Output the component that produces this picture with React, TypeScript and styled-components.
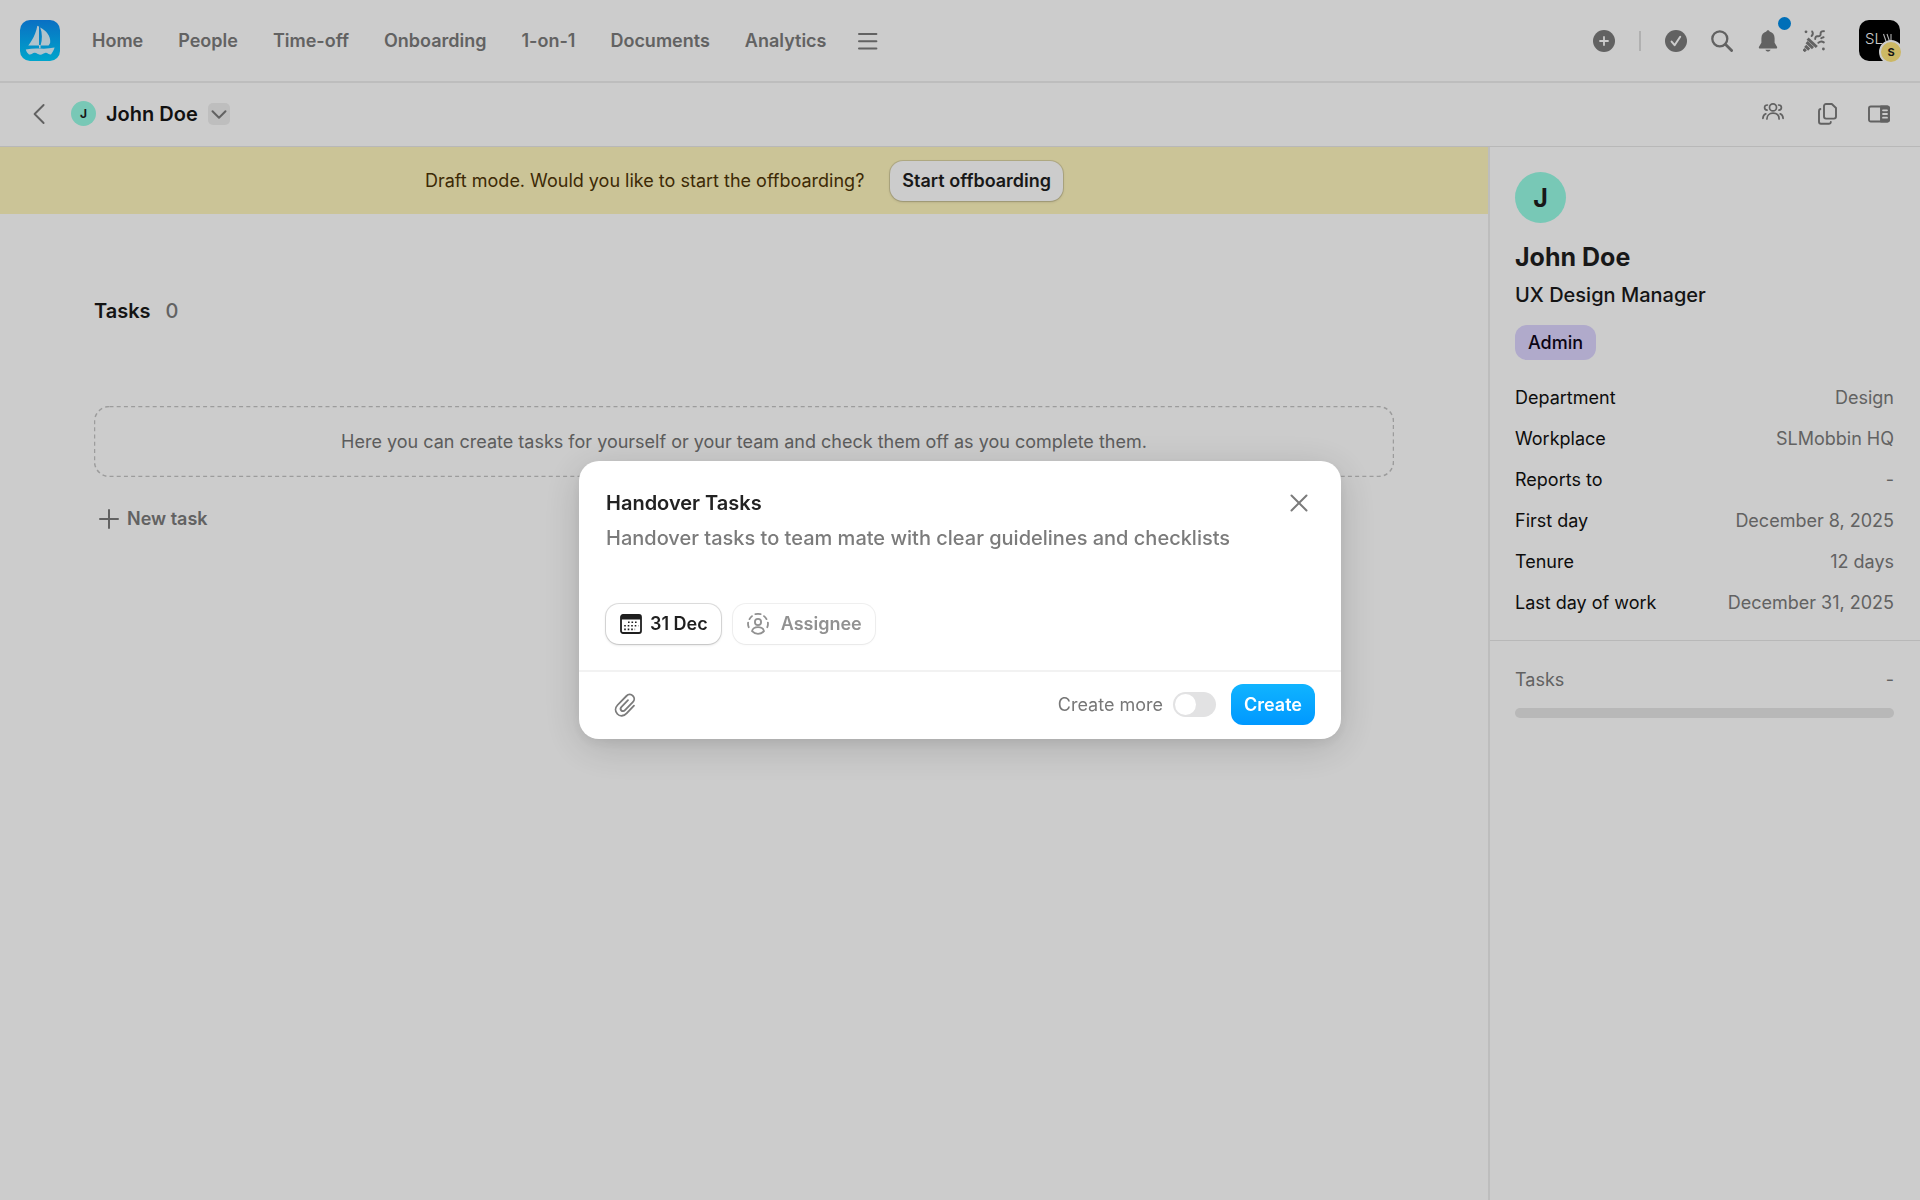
import React, { useState } from "react";
import styled, { createGlobalStyle, css } from "styled-components";

const GlobalStyle = createGlobalStyle`
  *, *::before, *::after { box-sizing: border-box; }
  body {
    margin: 0;
    background: #fff;
    color: #1a1a1a;
    font-family: Inter, "Liberation Sans", sans-serif;
    font-size: 18px;
    line-height: 24px;
    -webkit-font-smoothing: antialiased;
  }
  button, input, textarea { font: inherit; color: inherit; }
  h1, h2, p, dl, dd { margin: 0; }
`;

const muted = "#7b7b7b";
const line = "#ededed";

const Page = styled.div`
  min-height: 100vh;
  display: flex;
  flex-direction: column;
`;

const TopBar = styled.header`
  display: flex;
  align-items: center;
  justify-content: space-between;
  padding: 20px;
  border-bottom: 2px solid ${line};
`;

const TopGroup = styled.div`
  display: flex;
  align-items: center;
  gap: 32px;
`;

const LogoLink = styled.a`
  display: block;
  width: 40px;
  height: 41px;
  svg { display: block; }
`;

const Nav = styled.nav`
  display: flex;
  align-items: center;
  gap: 35px;
`;

const NavLink = styled.a`
  color: ${muted};
  font-weight: 600;
  text-decoration: none;
`;

const IconButton = styled.button`
  display: grid;
  place-items: center;
  flex: none;
  width: 22px;
  height: 22px;
  padding: 0;
  border: 0;
  background: none;
  color: ${muted};
  cursor: pointer;
  position: relative;
  svg { display: block; }
`;

const Tools = styled.div`
  display: flex;
  align-items: center;
  gap: 24px;
`;

const ToolDivider = styled.span`
  width: 2px;
  height: 20px;
  background: #dcdcdc;
`;

const NoticeDot = styled.span`
  position: absolute;
  top: -13px;
  right: -12px;
  width: 13px;
  height: 13px;
  border-radius: 50%;
  background: #008be6;
`;

const AccountButton = styled.button`
  position: relative;
  width: 41px;
  height: 41px;
  margin-left: 10px;
  padding: 0;
  border: 0;
  border-radius: 10px;
  background: #000;
  cursor: pointer;
  svg { display: block; }
`;

const AccountBadge = styled.span`
  position: absolute;
  right: -3px;
  bottom: -3px;
  width: 24px;
  height: 24px;
  border: 2px solid #fff;
  border-radius: 50%;
  background: #ffe67e;
  color: #1a1a1a;
  font-size: 11px;
  font-weight: 700;
  line-height: 20px;
  text-align: center;
`;

const SubBar = styled.div`
  display: flex;
  align-items: center;
  justify-content: space-between;
  height: 64px;
  padding: 0 30px 2px 28px;
  border-bottom: 1px solid #e6e6e6;
`;

const Crumb = styled.div`
  display: flex;
  align-items: center;
  gap: 10px;
`;

const CrumbTitle = styled.h1`
  font-size: 20px;
  font-weight: 600;
  color: #161616;
`;

const Initial = styled.span<{ $large?: boolean }>`
  display: grid;
  place-items: center;
  flex: none;
  border-radius: 50%;
  background: #97fae4;
  color: #1f1f1f;
  font-weight: 700;
  ${(p) =>
    p.$large
      ? css`width: 51px; height: 51px; font-size: 25px;`
      : css`width: 25px; height: 25px; margin-left: 11px; font-size: 12px;`}
`;

const MoreButton = styled(IconButton)`
  border-radius: 5px;
  background: #eee;
`;

const SubTools = styled.div`
  display: flex;
  align-items: center;
  gap: 31px;
`;

const Body = styled.div`
  flex: 1;
  display: grid;
  grid-template-columns: minmax(0, 1fr) 432px;
`;

const Banner = styled.div`
  display: flex;
  align-items: center;
  justify-content: center;
  gap: 26px;
  padding: 14px 26px 13px;
  background: #fef5bd;
  color: #4d3407;
`;

const OutlineButton = styled.button<{ $soft?: boolean; $icon?: boolean }>`
  display: inline-flex;
  align-items: center;
  height: 40px;
  padding: 0 12px;
  border: 0;
  border-radius: 13px;
  background: #fff;
  color: #1f1f1f;
  font-weight: 600;
  cursor: pointer;
  box-shadow: 0 0 0 1px rgba(0, 0, 0, 0.12), 0 1px 3px rgba(0, 0, 0, 0.16);
  ${(p) => p.$icon && css`padding: 0 13px 0 14px;`}
  ${(p) =>
    p.$soft &&
    css`
      color: #919191;
      box-shadow: 0 0 0 1px rgba(0, 0, 0, 0.06), 0 1px 3px rgba(0, 0, 0, 0.04);
    `}
`;

const Content = styled.section`
  padding: 84px 94px;
`;

const SectionTitle = styled.h2`
  display: flex;
  gap: 15px;
  font-size: 20px;
  font-weight: 600;
  line-height: 26px;
`;

const Count = styled.span`
  color: ${muted};
  font-weight: 500;
`;

const EmptyBox = styled.div`
  position: relative;
  display: grid;
  place-items: center;
  height: 71px;
  margin-top: 82px;
  color: #747474;
  svg { position: absolute; inset: 0; width: 100%; height: 100%; }
`;

const NewTask = styled.button`
  display: flex;
  align-items: center;
  gap: 8px;
  margin-top: 30px;
  padding: 0 5px;
  border: 0;
  background: none;
  color: ${muted};
  font-weight: 600;
  cursor: pointer;
`;

const Sidebar = styled.aside`
  border-left: 2px solid ${line};
`;

const Profile = styled.div`
  display: flex;
  flex-direction: column;
  align-items: flex-start;
  padding: 25px 26px 25px 25px;
  border-bottom: 1px solid #e6e6e6;
`;

const ProfileName = styled.h2`
  margin-top: 18px;
  font-size: 25px;
  font-weight: 700;
  line-height: 32px;
  color: #1f1f1f;
`;

const Role = styled.p`
  margin-top: 10px;
  font-size: 20px;
  font-weight: 500;
`;

const Tag = styled.span`
  margin-top: 18px;
  padding: 6px 13px 5px;
  border-radius: 12px;
  background: #ddd5fe;
  color: #0e0619;
  font-weight: 500;
`;

const Facts = styled.dl`
  width: 100%;
  margin-top: 26px;
  display: grid;
  gap: 17px;
`;

const Fact = styled.div`
  display: flex;
  justify-content: space-between;
`;

const FactName = styled.dt`
  color: #111;
`;

const FactValue = styled.dd`
  color: ${muted};
`;

const Progress = styled.div`
  display: grid;
  gap: 16px;
  padding: 27px 26px 26px 25px;
  color: ${muted};
`;

const ProgressTrack = styled.div`
  height: 10px;
  border-radius: 5px;
  background: #e6e6e6;
`;

const Overlay = styled.div`
  position: fixed;
  inset: 0;
  display: grid;
  place-items: center;
  background: rgba(0, 0, 0, 0.2);
`;

const Modal = styled.form`
  width: min(762px, 96vw);
  border-radius: 20px;
  background: #fff;
  box-shadow: 0 8px 40px rgba(0, 0, 0, 0.16), 0 4px 12px rgba(0, 0, 0, 0.06);
`;

const ModalMain = styled.div`
  display: grid;
  padding: 26px 26px 26px 27px;
`;

const ModalRow = styled.div`
  display: flex;
  align-items: center;
  justify-content: space-between;
`;

const TitleInput = styled.input`
  flex: 1;
  min-width: 0;
  height: 32px;
  padding: 0;
  border: 0;
  outline: 0;
  background: none;
  color: #222;
  font-size: 20px;
  font-weight: 600;
`;

const CloseButton = styled(IconButton)`
  width: 32px;
  height: 32px;
`;

const DetailsInput = styled.textarea`
  width: 100%;
  height: 79px;
  margin-top: 6px;
  padding: 0;
  border: 0;
  outline: 0;
  resize: none;
  background: none;
  color: #7b7b7b;
  font-size: 20px;
  font-weight: 500;
  line-height: 26px;
`;

const Chips = styled.div`
  display: flex;
  gap: 12px;
`;

const ChipText = styled.span<{ $wide?: boolean }>`
  margin-left: ${(p) => (p.$wide ? 12 : 8)}px;
`;

const ModalFooter = styled.div`
  display: flex;
  align-items: center;
  justify-content: space-between;
  padding: 12px 26px 14px;
  border-top: 2px solid #f2f2f2;
`;

const AttachButton = styled(IconButton)`
  width: 40px;
  height: 40px;
`;

const FooterActions = styled.div`
  display: flex;
  align-items: center;
  gap: 15px;
`;

const SwitchLabel = styled.label`
  display: flex;
  align-items: center;
  gap: 10px;
  color: #777;
  cursor: pointer;
`;

const Switch = styled.input`
  appearance: none;
  width: 43px;
  height: 25px;
  margin: 0;
  padding: 2px;
  border-radius: 13px;
  background: #e2e2e3;
  cursor: pointer;
  &::before {
    content: "";
    display: block;
    width: 21px;
    height: 21px;
    border-radius: 50%;
    background: #fff;
    transition: margin 0.15s;
  }
  &:checked { background: #00a2ff; }
  &:checked::before { margin-left: 18px; }
`;

const CreateButton = styled.button`
  height: 41px;
  padding: 0 13px;
  border: 0;
  border-radius: 12px;
  background: linear-gradient(#10b4ff, #0098ff);
  color: #fff;
  font-weight: 600;
  cursor: pointer;
`;

const stroke = {
  fill: "none",
  stroke: "currentColor",
  strokeLinecap: "round" as const,
  strokeLinejoin: "round" as const,
};

const Logo = () => (
  <svg width="40" height="41" viewBox="0 0 40 41" aria-hidden="true">
    <defs>
      <linearGradient id="sea" x1="0" y1="0" x2="0" y2="1">
        <stop offset="0" stopColor="#0c8cf5" />
        <stop offset="1" stopColor="#00cfff" />
      </linearGradient>
    </defs>
    <rect width="40" height="41" rx="10" fill="url(#sea)" />
    <g fill="#dcf4ff">
      <path d="M17.300 5.800 19 6.600V25.600H8.200C8.200 25.600 15.600 17 17.300 5.800Z" />
      <path d="M20.200 7.600C26 10.400 31 16.500 30.200 22.600 30 23.600 29.400 24.400 28.600 25.400H20.600C22.400 20 22.400 13 20.200 7.600Z" />
      <path d="M19 25h1.600v3.200H19Z" />
      <path d="M5.800 29.600Q13 28 20 28.600T34.600 27.600C34 30 32.600 32.400 31 34.600 28.600 34.800 27.600 32.600 25.600 32.800 23.600 33 22.400 35 20 34.800 17.800 34.600 16.600 32.600 14.600 32.800 12.400 33 11.400 35 9 34.400 7.800 33.800 6.200 31.600 5.800 29.600Z" />
    </g>
  </svg>
);

const MenuIcon = () => (
  <svg width="22" height="22" viewBox="0 0 22 22" {...stroke} strokeWidth="2">
    <path d="M1 4h17.400M1 11.200h17.400M1 18.400h17.400" />
  </svg>
);

const PlusCircle = () => (
  <svg width="22" height="22" viewBox="0 0 22 22">
    <circle cx="11" cy="11" r="11" fill="currentColor" />
    <path d="M11 7v8M7 11h8" stroke="#fff" strokeWidth="1.800" strokeLinecap="round" />
  </svg>
);

const CheckCircle = () => (
  <svg width="22" height="22" viewBox="0 0 22 22">
    <circle cx="11" cy="11" r="11" fill="currentColor" />
    <path d="m6.600 11.600 3 3.600 5.600-8.400" fill="none" stroke="#fff" strokeWidth="2" strokeLinecap="round" strokeLinejoin="round" />
  </svg>
);

const SearchIcon = () => (
  <svg width="22" height="22" viewBox="0 0 22 22" {...stroke} strokeWidth="2.300">
    <circle cx="8.800" cy="8.800" r="7.500" />
    <path d="m14.600 14.600 6 6" strokeWidth="2.800" />
  </svg>
);

const BellIcon = () => (
  <svg width="22" height="22" viewBox="0 0 22 22" fill="currentColor">
    <path d="M11 .2c.9 0 1.500.6 1.600 1.400 3.100.8 5 3.300 5 6.600v4.600l2.400 4c.5.9 0 1.800-1 1.800H3c-1 0-1.500-.9-1-1.800l2.400-4V8.200c0-3.300 1.900-5.800 5-6.600C9.500.8 10.100.2 11 .2Z" />
    <path d="M8.400 19.800h5.200c-.5 1.200-1.400 1.800-2.600 1.800s-2.100-.6-2.600-1.800Z" />
  </svg>
);

const PartyIcon = () => (
  <svg width="22" height="22" viewBox="0 0 22 22" {...stroke}>
    <g strokeWidth="3" strokeLinecap="butt">
      <path d="M4.600 8.600 13.800 17" />
      <path d="M3.600 12.200 10 18.200" />
      <path d="M2.200 15.800 6.200 19.600" />
      <path d="M.6 19 2.800 21.200" />
    </g>
    <g strokeWidth="1.900">
      <path d="M9.200 1.400c1 1.600.8 3.200-.6 4.600" />
      <path d="M21 1.200c-2.400-.4-3.600.8-3.400 2.600.2 1.800-1 2.800-3 2.400-1.600-.2-2.400 1-2.400 2.800" />
      <path d="M15.400 12.800c1.600-1.400 3.600-1.600 5.400-.4" />
      <path d="M20.600 7.200c-1 .2-1.700.5-2.400 1" />
    </g>
    <g fill="currentColor" stroke="none">
      <circle cx="3" cy="1.800" r="1.400" />
      <circle cx="20.400" cy="19" r="1.400" />
    </g>
  </svg>
);

const CompanyMark = () => (
  <svg width="41" height="41" viewBox="0 0 41 41" aria-hidden="true">
    <text x="6" y="24" fill="#fff" fontFamily="Inter, sans-serif" fontSize="15" fontWeight="300">SL</text>
    <path d="M24.500 14l3.500 10M28 14l3.500 10M32 14v10" fill="none" stroke="#ddd" strokeWidth="1.100" />
  </svg>
);

const BackIcon = () => (
  <svg width="22" height="22" viewBox="0 0 22 22" {...stroke} strokeWidth="1.900">
    <path d="M15.600 2 6.600 11l9 9" />
  </svg>
);

const DownIcon = () => (
  <svg width="22" height="22" viewBox="0 0 22 22" {...stroke} strokeWidth="2">
    <path d="m4.500 8.200 6.500 6.600 6.500-6.600" />
  </svg>
);

const PeopleIcon = () => (
  <svg width="22" height="22" viewBox="0 0 22 22" {...stroke} strokeWidth="1.700">
    <circle cx="11" cy="4.400" r="3.500" />
    <path d="M4.900 16C4.900 12.400 7.400 10.200 11 10.200s6.100 2.200 6.100 5.800" />
    <path d="M5.400 2C3.700 2 2.600 3.100 2.600 4.600s1 2.500 2.500 2.600M16.600 2c1.700 0 2.800 1.100 2.800 2.600s-1 2.500-2.500 2.600" />
    <path d="M.9 15.400C1 13 2 11.600 3.800 10.800M21.100 15.400C21 13 20 11.600 18.200 10.800" />
  </svg>
);

const CopyIcon = () => (
  <svg width="22" height="22" viewBox="0 0 22 22" {...stroke} strokeWidth="1.900">
    <path d="M11 1h5.800L21 5v8.600a2 2 0 0 1-2 2h-8a2 2 0 0 1-2-2V3a2 2 0 0 1 2-2Z" />
    <path d="M5.400 6A2 2 0 0 0 4 8v10.800a2 2 0 0 0 2 2h7.800a2 2 0 0 0 2-1.800" />
  </svg>
);

const PanelIcon = () => (
  <svg width="22" height="22" viewBox="0 0 22 22" {...stroke} strokeWidth="1.900">
    <rect x="1" y="3.500" width="20" height="15" rx="1.800" />
    <path d="M13 3.500h6.200a1.800 1.800 0 0 1 1.800 1.800v11.400a1.800 1.800 0 0 1-1.800 1.800H13Z" fill="currentColor" />
    <path d="M15 7.300h4M15 11h4M15 14.700h4" stroke="#fff" strokeWidth="1.800" />
  </svg>
);

const PlusIcon = () => (
  <svg width="20" height="20" viewBox="0 0 20 20" {...stroke} strokeWidth="2">
    <path d="M10 1v18M1 10h18" />
  </svg>
);

const CloseIcon = () => (
  <svg width="18" height="18" viewBox="0 0 18 18" {...stroke} strokeWidth="2">
    <path d="m1.500 1.500 15 15M16.500 1.500l-15 15" />
  </svg>
);

const CalendarIcon = () => (
  <svg width="22" height="20" viewBox="0 0 22 20" aria-hidden="true">
    <rect x="1" y="1" width="20" height="18" rx="2" fill="none" stroke="currentColor" strokeWidth="1.800" />
    <path d="M1 3a2 2 0 0 1 2-2h16a2 2 0 0 1 2 2v2.600H1Z" fill="currentColor" />
    <path
      d="M8 8.200h10.500M4.200 11.800h14.300M4.200 15.400h10.900"
      stroke="currentColor"
      strokeWidth="1.600"
      strokeDasharray="1.600 1.900"
    />
  </svg>
);

const AssigneeIcon = () => (
  <svg width="22" height="22" viewBox="0 0 22 22" {...stroke} strokeWidth="1.800" aria-hidden="true">
    <circle cx="11" cy="9" r="3.100" />
    <path d="M5 18.200c.6-2.500 3-4 6-4s5.400 1.500 6 4C15.400 19.900 13.300 20.800 11 20.800S6.600 19.900 5 18.200Z" />
    <path d="M8.400 1.200Q11 .5 13.600 1.200M17 3.100q1.600 1.300 2.500 3M20.900 9.600q.3 2.400-.6 4.600M5 3.100Q3.400 4.400 2.500 6.100M1.100 9.600q-.3 2.400.6 4.600" />
  </svg>
);

const ClipIcon = () => (
  <svg width="22" height="24" viewBox="0 0 22 24" {...stroke} strokeWidth="1.800">
    <path d="M20 12.600 12.600 20.400C9.800 23.300 5.900 23.600 3.400 21 .9 18.400 1 14.700 3.600 12L12.400 3c1.900-2 4.700-2 6.500-.2s1.700 4.500-.1 6.400L11 17.200c-1.200 1.200-2.700 1.300-3.700.3s-.9-2.500.2-3.700L14 7.200" />
  </svg>
);

const navItems = ["Home", "People", "Time-off", "Onboarding", "1-on-1", "Documents", "Analytics"];

const facts = [
  ["Department", "Design"],
  ["Workplace", "SLMobbin HQ"],
  ["Reports to", "-"],
  ["First day", "December 8, 2025"],
  ["Tenure", "12 days"],
  ["Last day of work", "December 31, 2025"],
];

export default function App() {
  const [more, setMore] = useState(false);
  return (
    <>
      <GlobalStyle />
      <Page>
        <TopBar>
          <TopGroup>
            <LogoLink href="#" aria-label="Start page"><Logo /></LogoLink>
            <Nav>
              {navItems.map((item) => (
                <NavLink href="#" key={item}>{item}</NavLink>
              ))}
            </Nav>
            <IconButton aria-label="More sections"><MenuIcon /></IconButton>
          </TopGroup>
          <Tools>
            <IconButton aria-label="Add"><PlusCircle /></IconButton>
            <ToolDivider />
            <IconButton aria-label="To-dos"><CheckCircle /></IconButton>
            <IconButton aria-label="Search"><SearchIcon /></IconButton>
            <IconButton aria-label="Notifications"><BellIcon /><NoticeDot /></IconButton>
            <IconButton aria-label="What's new"><PartyIcon /></IconButton>
            <AccountButton aria-label="Account">
              <CompanyMark />
              <AccountBadge>S</AccountBadge>
            </AccountButton>
          </Tools>
        </TopBar>

        <SubBar>
          <Crumb>
            <IconButton aria-label="Back"><BackIcon /></IconButton>
            <Initial>J</Initial>
            <CrumbTitle>John Doe</CrumbTitle>
            <MoreButton aria-label="Switch person"><DownIcon /></MoreButton>
          </Crumb>
          <SubTools>
            <IconButton aria-label="Members"><PeopleIcon /></IconButton>
            <IconButton aria-label="Copy"><CopyIcon /></IconButton>
            <IconButton aria-label="Toggle panel"><PanelIcon /></IconButton>
          </SubTools>
        </SubBar>

        <Body>
          <main>
            <Banner>
              <span>Draft mode. Would you like to start the offboarding?</span>
              <OutlineButton>Start offboarding</OutlineButton>
            </Banner>
            <Content>
              <SectionTitle>Tasks <Count>0</Count></SectionTitle>
              <EmptyBox>
                <svg aria-hidden="true">
                  <rect x="0.5" y="0.5" rx="15" fill="none" stroke="#c4c4c4" strokeWidth="1.500" strokeDasharray="4 3.200" style={{ width: "calc(100% - 1px)", height: "calc(100% - 1px)" }} />
                </svg>
                Here you can create tasks for yourself or your team and check them off as you complete them.
              </EmptyBox>
              <NewTask><PlusIcon />New task</NewTask>
            </Content>
          </main>

          <Sidebar>
            <Profile>
              <Initial $large>J</Initial>
              <ProfileName>John Doe</ProfileName>
              <Role>UX Design Manager</Role>
              <Tag>Admin</Tag>
              <Facts>
                {facts.map(([name, value]) => (
                  <Fact key={name}>
                    <FactName>{name}</FactName>
                    <FactValue>{value}</FactValue>
                  </Fact>
                ))}
              </Facts>
            </Profile>
            <Progress>
              <Fact><span>Tasks</span><span>-</span></Fact>
              <ProgressTrack />
            </Progress>
          </Sidebar>
        </Body>
      </Page>

      <Overlay>
        <Modal role="dialog" aria-label="New task" onSubmit={(e) => e.preventDefault()}>
          <ModalMain>
            <ModalRow>
              <TitleInput aria-label="Task title" defaultValue="Handover Tasks" />
              <CloseButton type="button" aria-label="Close"><CloseIcon /></CloseButton>
            </ModalRow>
            <DetailsInput aria-label="Description" defaultValue="Handover tasks to team mate with clear guidelines and checklists" />
            <Chips>
              <OutlineButton type="button" $icon><CalendarIcon /><ChipText>31 Dec</ChipText></OutlineButton>
              <OutlineButton type="button" $icon $soft><AssigneeIcon /><ChipText $wide>Assignee</ChipText></OutlineButton>
            </Chips>
          </ModalMain>
          <ModalFooter>
            <AttachButton type="button" aria-label="Attach file"><ClipIcon /></AttachButton>
            <FooterActions>
              <SwitchLabel>
                Create more
                <Switch type="checkbox" role="switch" checked={more} onChange={(e) => setMore(e.target.checked)} />
              </SwitchLabel>
              <CreateButton type="submit">Create</CreateButton>
            </FooterActions>
          </ModalFooter>
        </Modal>
      </Overlay>
    </>
  );
}
